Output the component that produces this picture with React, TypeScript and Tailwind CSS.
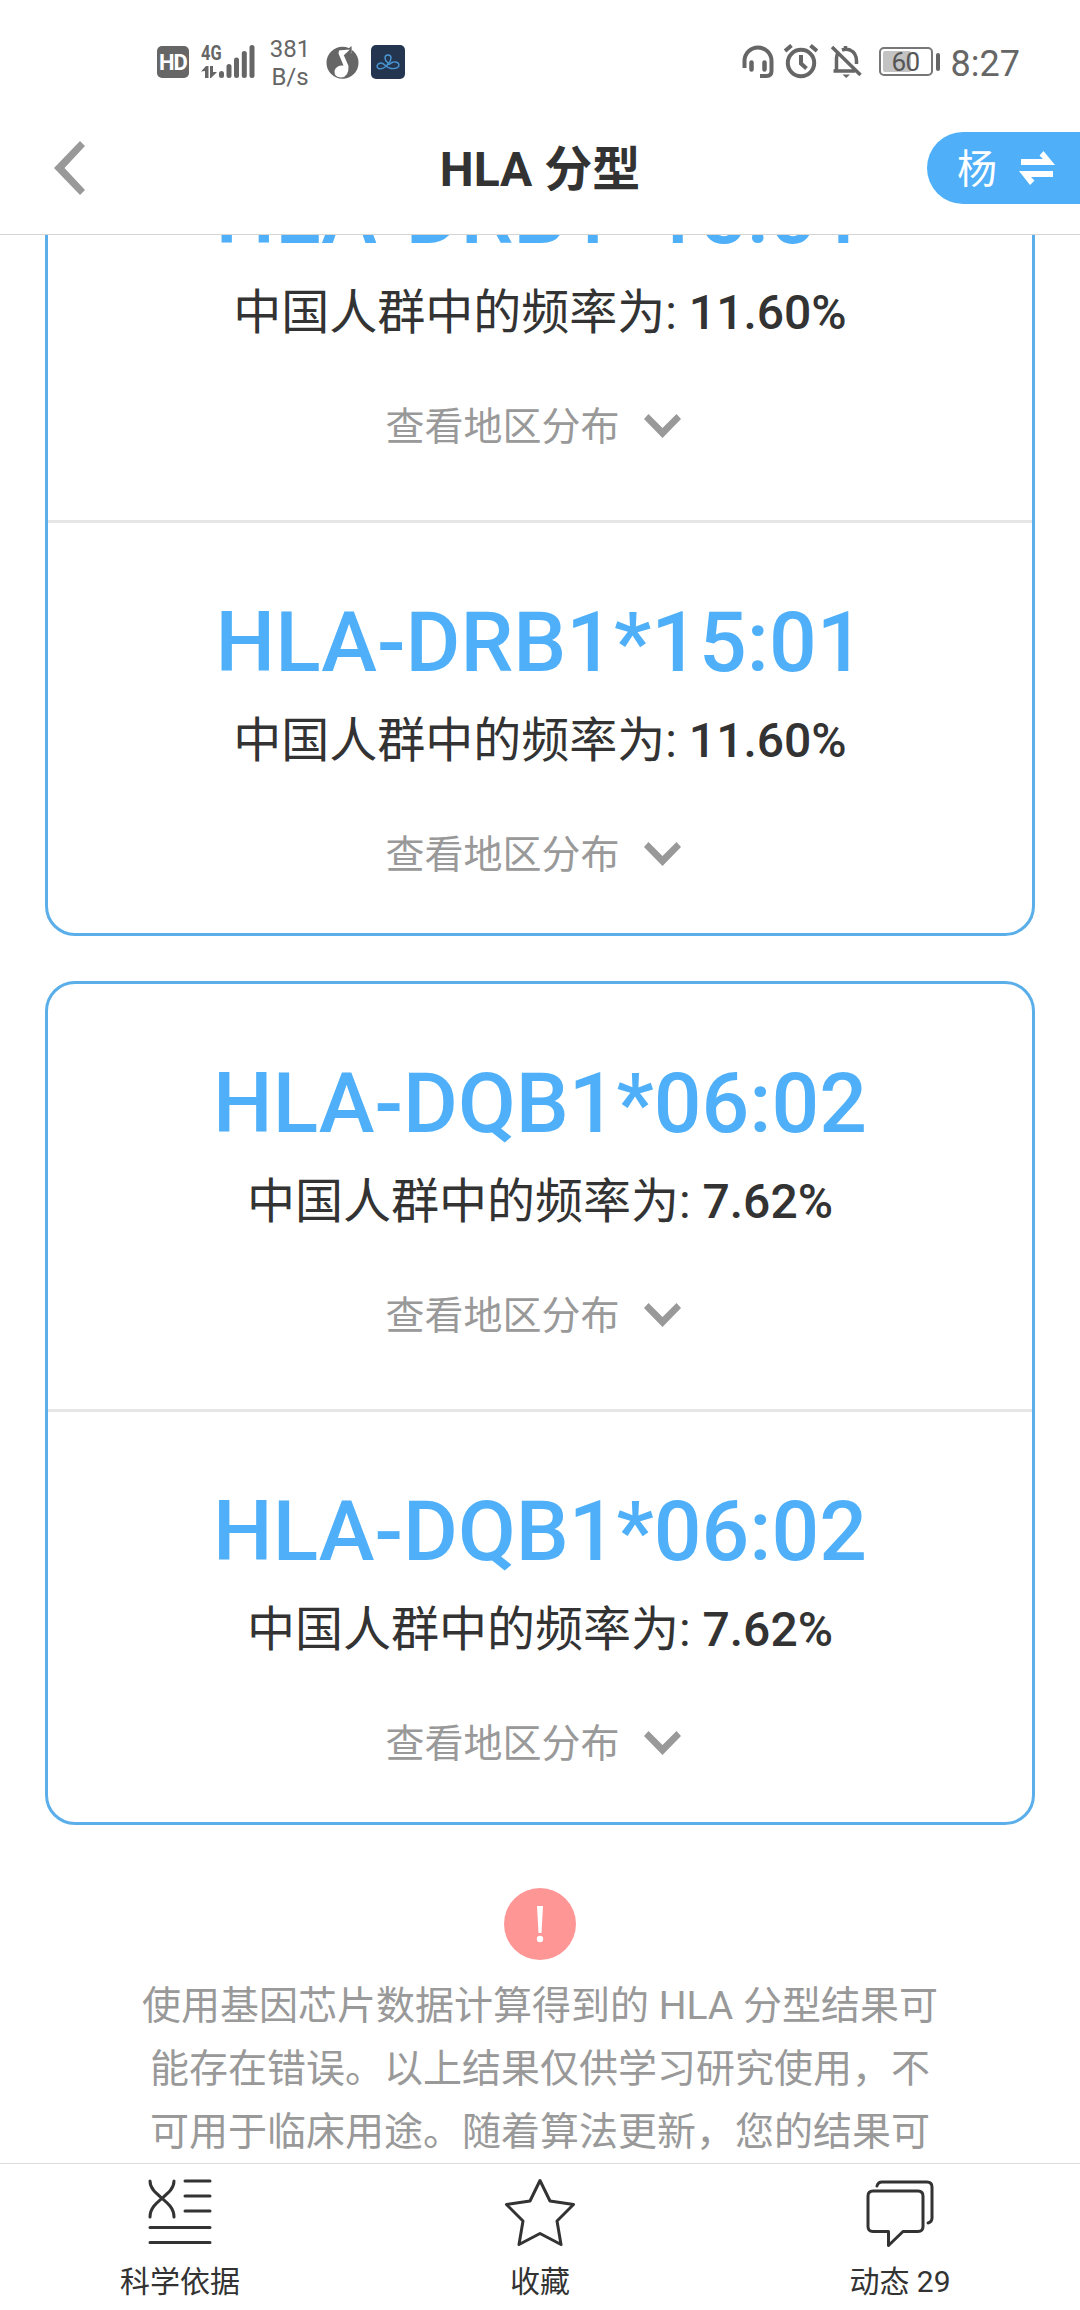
import type { ReactNode } from "react";

type Allele = {
  name: string;
  frequency: string;
};

const groups: Allele[][] = [
  [
    { name: "HLA-DRB1*15:01", frequency: "11.60%" },
    { name: "HLA-DRB1*15:01", frequency: "11.60%" },
  ],
  [
    { name: "HLA-DQB1*06:02", frequency: "7.62%" },
    { name: "HLA-DQB1*06:02", frequency: "7.62%" },
  ],
];

const notice = [
  "使用基因芯片数据计算得到的 HLA 分型结果可",
  "能存在错误。以上结果仅供学习研究使用，不",
  "可用于临床用途。随着算法更新，您的结果可",
];

function StatusBar() {
  return (
    <div className="flex h-[100px] shrink-0 items-start justify-between pl-[157px] pr-[60px] text-[#666]">
      <div className="flex items-start">
        <div className="mt-[46px] flex h-8 w-8 items-center justify-center rounded-[5px] bg-[#666] pt-px text-[22px] font-bold leading-none tracking-[-1px] text-white">
          HD
        </div>

        {/* Mobile signal */}
        <div className="relative ml-3 mt-[45px] h-[34px] w-[54px]">
          <span className="absolute left-0 top-[-1px] origin-left scale-x-[0.78] text-[21px] font-bold leading-[18px]">
            4G
          </span>
          <svg className="h-[34px] w-[54px]" viewBox="0 0 54 34" fill="#666">
            <path d="M0 26.500l5-5.500h2.500v12H4v-7zM9 21h3v6h4l-6 6H9z" />
            <rect x="18" y="26" width="5" height="7" rx="2.500" />
            <rect x="25.500" y="19" width="5" height="14" rx="2.500" />
            <rect x="33" y="12.500" width="5" height="20.500" rx="2.500" />
            <rect x="40.800" y="6" width="5" height="27" rx="2.500" />
            <rect x="48.500" y="0" width="5" height="33" rx="2.500" />
          </svg>
        </div>

        <div className="ml-[14px] mt-[35px] flex w-[42px] flex-col text-center text-[24px] leading-[28px]">
          <span>381</span>
          <span>B/s</span>
        </div>

        {/* Music player */}
        <svg className="ml-[15px] mt-[46px] h-[33px] w-[34px]" viewBox="0 0 34 33">
          <circle cx="16.500" cy="16.800" r="16" fill="#666" />
          <path d="M13 4.500L23 3.500L25.500 0L26 7L17.500 8.500L22.500 20Q23 31 15 31.500Q8 31 8.500 25Q10 19 17.500 19.500L12.500 7.500z" fill="#fff" />
          <path d="M19.500 5L25.500 0L25.800 6.500L20 12L18 8z" fill="#666" />
          <path d="M13 5L24 3.500L17 10z" fill="#fff" />
        </svg>

        <div className="ml-[11px] mt-[45px] flex h-[34px] w-[34px] items-center justify-center rounded-[5px] bg-[#24364f]">
          <svg className="h-[16px] w-[24px]" viewBox="0 0 24 16" fill="none" stroke="#4a97d6" strokeWidth="1.400">
            <path d="M12 9C8 6 8 1 12 1S16 6 12 10C9 14 5 15.500 2.500 14.500C0 13 1 9.500 4.500 9C8 8.500 10 14 15 14.500C20 15 23 13.500 23 11S19 7 16 8.500S13 12 12 9z" />
          </svg>
        </div>
      </div>

      <div className="flex items-start">
        <svg className="mt-[44px] h-[35px] w-[32px]" viewBox="0 0 32 35" fill="none" stroke="#666" strokeWidth="4" strokeLinecap="round">
          <path d="M2.500 24V17A13.500 13.500 0 0 1 29.500 17V27Q29.500 32 24.500 32H18" strokeLinecap="butt" />
          <path d="M9.500 18.500V25.500M22.500 18.500V25.500" strokeWidth="4.500" />
        </svg>

        <svg className="ml-[10px] mt-[44px] h-[35px] w-[34px]" viewBox="0 0 34 35" fill="none" stroke="#666" strokeWidth="4">
          <circle cx="17" cy="19" r="13.200" />
          <path d="M17 11V19.500L22.500 24.500M1 7L7.500 1.500M33 7L26.500 1.500" />
        </svg>

        <svg className="ml-[12px] mt-[44px] h-[35px] w-[32px]" viewBox="0 0 32 35" fill="none" stroke="#666" strokeWidth="3.500">
          <path d="M2 3L30.500 31M3.500 27H25M6.500 27V14Q6.500 10.500 8.500 8.500M12 6Q16 4.500 20 6Q26.500 9 26.500 17V20M15.500 6V2" />
          <path d="M12.500 30.500H20L16.200 34z" fill="#666" stroke="none" />
        </svg>

        <div className="ml-[17px] mt-[47px] flex items-center gap-[3px]">
          <div className="relative flex h-[29px] w-[54px] items-center justify-center rounded-[5px] border-2 border-[#777]">
            <div className="absolute left-[2px] top-[2px] h-[21px] w-[28px] rounded-[2px] bg-[#c3c3c3]" />
            <span className="relative text-[26px] leading-none tracking-[-0.5px] text-[#555]">60</span>
          </div>
          <div className="h-[18px] w-1 rounded-full bg-[#666]" />
        </div>

        <span className="ml-[11px] mt-[45px] text-[36px] leading-[38px]">8:27</span>
      </div>
    </div>
  );
}

function Header() {
  return (
    <header className="flex h-[135px] shrink-0 items-start justify-between border-b border-[#d4d4d4]">
      <div className="w-[153px] pl-[54px] pt-[41px]">
        <svg className="h-[54px] w-[31px]" viewBox="0 0 31 54">
          <path d="M26 0L31 5L10.500 27L31 49L26 54L0 27z" fill="#999" />
        </svg>
      </div>
      <h1 className="pt-[46px] text-[48px] font-bold leading-[48px]">HLA 分型</h1>
      <button className="mt-8 flex h-[72px] w-[153px] items-center rounded-l-full bg-[#4fb0f9] pl-[30px] text-[40px] leading-none text-white">
        <span className="mt-1">杨</span>
        <svg className="ml-[22px] h-[34px] w-[36px]" viewBox="0 0 36 34" fill="#fff">
          <path d="M2 8H24L20.500 4.500L24.500 0L36 14H2z" />
          <path d="M34 26H12L15.500 29.500L11 34L0 20H34z" />
        </svg>
      </button>
    </header>
  );
}

function AlleleItem({ name, frequency }: Allele) {
  return (
    <div className="flex h-[428px] flex-col items-center border-b-[3px] border-[#e6e6e6] pt-[78px] last:h-[410px] last:border-b-0">
      <h2 className="text-[84px] font-medium leading-[84px] text-[#4fb0f9]">{name}</h2>
      <p className="mt-[32px] text-[48px] leading-[48px]">
        中国人群中的频率为: <span className="font-medium">{frequency}</span>
      </p>
      <button className="mt-[71px] flex items-center pr-[14px] text-[39px] leading-[39px] text-[#999]">
        查看地区分布
        <svg className="-mt-[3px] ml-6 h-6 w-[37px]" viewBox="0 0 37 24">
          <path d="M0 5L4.500 0L18.500 14L32.500 0L37 5L18.500 24z" fill="#999" />
        </svg>
      </button>
    </div>
  );
}

function Tab({ label, children }: { label: string; children: ReactNode }) {
  return (
    <button className="flex flex-1 flex-col items-center pt-[14px] text-[30px] leading-[30px]">
      <svg
        className="h-[70px] w-[72px]"
        viewBox="0 0 72 70"
        fill="none"
        stroke="#333"
        strokeWidth="3"
        strokeLinecap="round"
        strokeLinejoin="round"
      >
        {children}
      </svg>
      <span className="mt-[19px]">{label}</span>
    </button>
  );
}

export default function App() {
  return (
    <div className="flex h-[2310px] w-[1080px] flex-col overflow-hidden bg-white font-[Roboto,'Noto_Sans_CJK_SC',sans-serif] text-[#333]">
      <StatusBar />
      <Header />

      <main className="min-h-0 flex-1 overflow-hidden px-[45px]">
        {/* List is scrolled, so the first card starts above the fold */}
        <div className="-mt-[143px] flex flex-col gap-[45px]">
          {groups.map((items, i) => (
            <section key={i} className="rounded-[30px] border-[3px] border-[#5aaeea]">
              {items.map((item, j) => (
                <AlleleItem key={j} {...item} />
              ))}
            </section>
          ))}
        </div>

        <div className="mt-[63px] flex flex-col items-center">
          <svg className="h-[72px] w-[72px]" viewBox="0 0 72 72">
            <circle cx="36" cy="36" r="36" fill="#ff9696" />
            <path d="M33 18H39L37.500 45H34.500z" fill="#fff" />
            <circle cx="36" cy="51" r="3.200" fill="#fff" />
          </svg>
          <div className="mt-[15px] text-center text-[39px] leading-[63px] text-[#999]">
            {notice.map((line) => (
              <p key={line} className="whitespace-nowrap">
                {line}
              </p>
            ))}
          </div>
        </div>
      </main>

      <nav className="flex h-[147px] shrink-0 border-t border-[#dcdcdc]">
        <Tab label="科学依据">
          <path d="M6 3C6 18 30 22 30 39M30 3C30 18 6 22 6 39M41 3H66M41 18H66M41 33H66M6 49.500H66M6 64.500H66" />
        </Tab>
        <Tab label="收藏">
          <path d="M36 2.500L46 23L69.500 26.500L53 43L57 66.500L36 55.500L15 66.500L19 43L2.500 26.500L26 23z" />
        </Tab>
        <Tab label="动态 29">
          <path d="M9 13H54Q59 13 59 18V48.500Q59 53.500 54 53.500H39L24.500 67.500V53.500H9Q4 53.500 4 48.500V18Q4 13 9 13z" />
          <path d="M13 8Q14 4 18 4H63Q68 4 68 9V40Q68 44 64 45" />
        </Tab>
      </nav>
    </div>
  );
}
